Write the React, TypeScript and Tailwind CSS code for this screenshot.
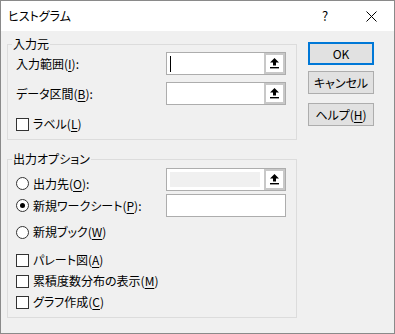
import type { ReactNode } from "react";

const UpArrow = () => (
  <svg width="9" height="11" viewBox="0 0 9 11" fill="#000">
    <polygon points="4.5,0 9,4.5 6,4.5 6,7.5 3,7.5 3,4.5 0,4.5" />
    <rect x="0" y="9" width="9" height="1.4" />
  </svg>
);

const CloseIcon = () => (
  <svg width="11" height="11" viewBox="0 0 11 11" stroke="#000" strokeWidth="1">
    <line x1="0.5" y1="0.5" x2="10.5" y2="10.5" />
    <line x1="10.5" y1="0.5" x2="0.5" y2="10.5" />
  </svg>
);

function K({ children }: { children: ReactNode }) {
  return <span className="underline underline-offset-[2px] decoration-1">{children}</span>;
}

function Checkbox({ label }: { label: ReactNode }) {
  return (
    <div className="flex h-[16px] items-center">
      <span className="ml-[8px] h-[13px] w-[13px] border border-[#333] bg-white" />
      <span className="ml-[4px] leading-[16px]">{label}</span>
    </div>
  );
}

function Radio({ label, checked }: { label: ReactNode; checked?: boolean }) {
  return (
    <div className="flex items-center">
      <span className="ml-[8px] flex h-[13px] w-[13px] items-center justify-center rounded-full border border-[#333] bg-white">
        {checked && <span className="h-[5px] w-[5px] rounded-full bg-[#000]" />}
      </span>
      <span className="ml-[4px] leading-[16px]">{label}</span>
    </div>
  );
}

function RefInput({ caret, disabled }: { caret?: boolean; disabled?: boolean }) {
  return (
    <div className="flex h-[23px] w-[120px] border border-[#adadad] bg-white">
      <div className="flex flex-1 items-center">
        {caret && <span className="ml-[3px] h-[16px] w-px bg-[#000]" />}
        {disabled && <span className="ml-[3px] h-[15px] w-[90px] bg-[#f0f0f0]" />}
      </div>
      <div className="w-[21px] bg-[#c8c8c8] p-[2px]">
        <div className="flex h-full items-center justify-center bg-white">
          <UpArrow />
        </div>
      </div>
    </div>
  );
}

function Group({ title, className, children }: { title: string; className: string; children: ReactNode }) {
  return (
    <div className={`relative border border-[#dcdcdc] ${className}`}>
      <span className="absolute -top-[9px] left-[4px] bg-[#f0f0f0] px-px leading-[16px]">{title}</span>
      {children}
    </div>
  );
}

function Btn({ children, primary }: { children: ReactNode; primary?: boolean }) {
  return (
    <div
      className={`flex h-[23px] w-[66px] items-center justify-center bg-[#e1e1e1] ${
        primary ? "border-2 border-[#0078d7]" : "border border-[#adadad]"
      }`}
    >
      {children}
    </div>
  );
}

export default function App() {
  return (
    <div className="flex h-[334px] w-[395px] flex-col border border-[#8a8a8a] font-['Yu_Gothic_UI','Noto_Sans_CJK_JP',sans-serif] text-[12px] text-black [font-feature-settings:'palt']">
      <div className="flex h-[30px] items-center bg-white pl-[7px]">
        <span>ヒストグラム</span>
        <span className="ml-auto w-[12px] text-center text-[13px]">?</span>
        <span className="ml-[35px] mr-[17px] flex">
          <CloseIcon />
        </span>
      </div>
      <div className="flex flex-1 bg-[#f0f0f0] pl-[6px]">
        <div className="w-[290px] pt-[13px]">
          <Group title="入力元" className="h-[96px] pt-[7px]">
            <div className="flex h-[23px] items-center">
              <span className="w-[158px] pl-[8px]">
                入力範囲(<K>I</K>):
              </span>
              <RefInput caret />
            </div>
            <div className="mt-[7px] flex h-[23px] items-center">
              <span className="w-[158px] pl-[8px]">
                データ区間(<K>B</K>):
              </span>
              <RefInput />
            </div>
            <div className="mt-[11px]">
              <Checkbox label={<>ラベル(<K>L</K>)</>} />
            </div>
          </Group>
          <Group title="出力オプション" className="mt-[19px] h-[159px] pt-[8px]">
            <div className="flex h-[23px] items-center">
              <div className="w-[158px] pt-[8px]">
                <Radio label={<>出力先(<K>O</K>):</>} />
              </div>
              <RefInput disabled />
            </div>
            <div className="mt-[3px] flex h-[23px] items-center">
              <div className="w-[158px]">
                <Radio checked label={<>新規ワークシート(<K>P</K>):</>} />
              </div>
              <div className="h-[23px] w-[120px] border border-[#adadad] bg-white" />
            </div>
            <div className="mt-[7px] flex h-[16px] items-center">
              <Radio label={<>新規ブック(<K>W</K>)</>} />
            </div>
            <div className="mt-[12px] flex flex-col gap-[5px]">
              <Checkbox label={<>パレート図(<K>A</K>)</>} />
              <Checkbox label={<>累積度数分布の表示(<K>M</K>)</>} />
              <Checkbox label={<>グラフ作成(<K>C</K>)</>} />
            </div>
          </Group>
        </div>
        <div className="ml-[11px] flex flex-col pt-[11px]">
          <Btn primary>OK</Btn>
          <div className="mt-[6px]">
            <Btn>キャンセル</Btn>
          </div>
          <div className="mt-[9px]">
            <Btn>
              <span>
                ヘルプ(<K>H</K>)
              </span>
            </Btn>
          </div>
        </div>
      </div>
    </div>
  );
}
